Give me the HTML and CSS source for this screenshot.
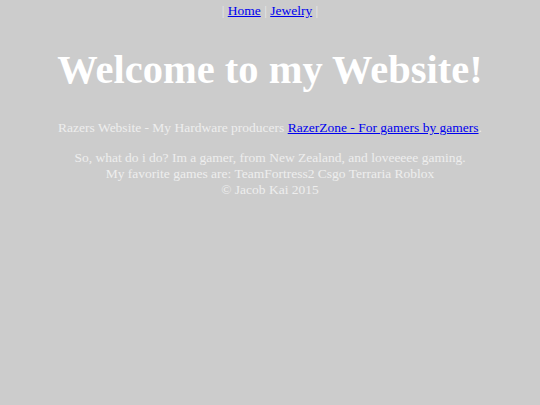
FILE: index.html
```html
<!DOCTYPE html>
<html>
<head>
<meta charset="utf-8">
<link rel="stylesheet" href="styles.css">
</head>
<body class="page">
<div class="nav"><span class="sep">|</span> <a href="#">Home</a> <span class="sep">|</span> <a href="#">Jewelry</a> <span class="sep">|</span></div>
<h1 class="title">Welcome to my Website!</h1>
<p class="intro">Razers Website - My Hardware producers <a href="#">RazerZone - For gamers by gamers</a>.</p>
<p class="about">So, what do i do? Im a gamer, from New Zealand, and loveeeee gaming.<br>My favorite games are: TeamFortress2 Csgo Terraria Roblox<br>&copy; Jacob Kai 2015</p>
</body>
</html>
```
FILE: styles.css
```css
html { background: #cccccc; }
.page {
  margin: 3px 7px;
  font-family: "Liberation Serif", serif;
  font-size: 13.5px;
  color: #eeeeee;
  text-align: center;
}
.page a { color: #0000ee; }
.sep { color: #e8e8e8; }
.title {
  font-size: 40.5px;
  color: #ffffff;
  margin: 27px 0;
}
.intro { margin: 13.5px 0; }
.about { margin: 13.5px 0; }
```
